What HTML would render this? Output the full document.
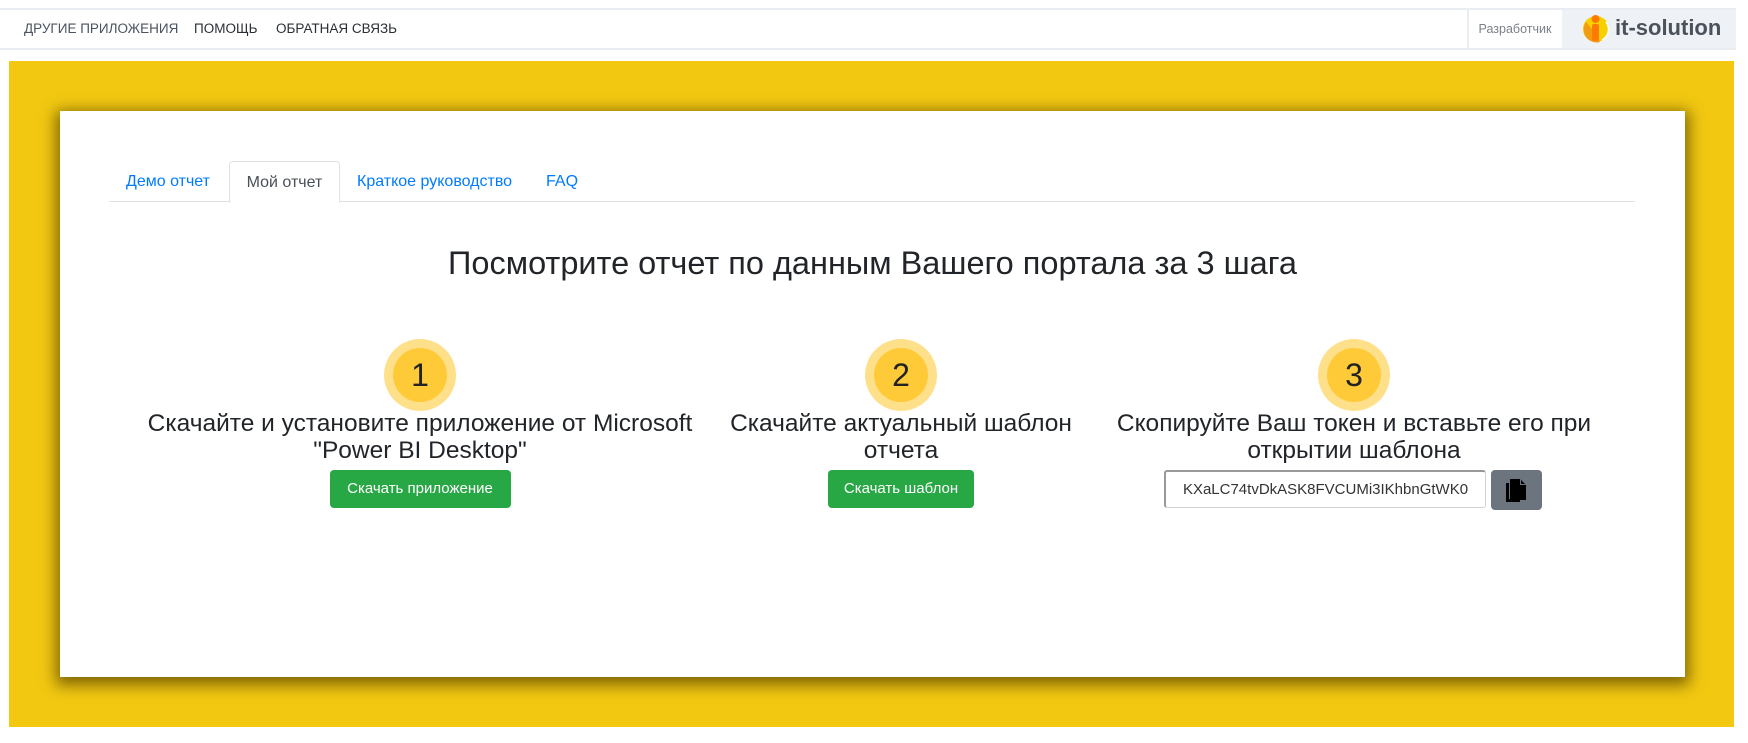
<!DOCTYPE html>
<html><head><meta charset="utf-8"><style>
*{box-sizing:border-box;margin:0;padding:0}
body{width:1748px;height:743px;background:#fff;font-family:"Liberation Sans","DejaVu Sans",sans-serif;position:relative;overflow:hidden;color:#212529}
.nav{position:absolute;left:0;top:8px;width:1736px;height:42px;border-top:2px solid #e9edf1;border-bottom:2px solid #e9edf1}
.nav a{position:absolute;top:11px;font-size:13.5px;color:#2a2f36;text-decoration:none}
.dev{position:absolute;left:1467px;top:0;width:94px;height:38px;font-size:12.5px;color:#7b8189;line-height:38px;text-align:center;border-left:2px solid #e9edf1}
.logo{position:absolute;left:1562px;top:0;width:174px;height:38px;background:#eef1f5}
.yellow{position:absolute;left:9px;top:61px;width:1725px;height:666px;background:#f2c811}
.card{position:absolute;left:60px;top:111px;width:1625px;height:566px;background:#fff;box-shadow:0 4px 14px 4px rgba(90,70,0,.75)}
.tabs{position:absolute;left:49px;top:50px;width:1526px;height:41px;border-bottom:1px solid #dee2e6}
.tab{position:absolute;top:0;height:41px;line-height:42px;font-size:16px;color:#007bff}
.tab.act{color:#495057;border:1px solid #dee2e6;border-bottom:1px solid #fff;border-radius:4px 4px 0 0;background:#fff;height:42px;top:0}
h1{position:absolute;left:0;width:1625px;top:134px;text-align:center;font-weight:normal;font-size:32.5px;color:#212529}
.col{position:absolute;top:228px;width:600px;text-align:center}
.circ{width:72px;height:72px;border-radius:50%;background:#ffe08a;margin:0 auto;position:relative}
.circ span{position:absolute;left:9px;top:9px;width:54px;height:54px;border-radius:50%;background:#ffca38;font-size:32px;line-height:54px;text-align:center;color:#222}
.txt{font-size:24.5px;line-height:27px;margin-top:-1px;color:#212529}
.btn{display:inline-block;background:#28a745;color:#fff;font-size:15px;border-radius:4px;height:38px;line-height:38px;margin-top:6px}
</style></head><body>
<div class="nav">
<a style="left:24px;color:#4a5360">ДРУГИЕ ПРИЛОЖЕНИЯ</a>
<a style="left:194px">ПОМОЩЬ</a>
<a style="left:276px">ОБРАТНАЯ СВЯЗЬ</a>
<div class="dev">Разработчик</div>
<div class="logo">
<svg width="40" height="38" viewBox="0 0 40 38" style="position:absolute;left:14px;top:0">
<circle cx="20" cy="19" r="13" fill="#f7d000"/>
<path d="M10 12 A13 13 0 0 0 24 32 L20 24 Z" fill="#f39c12"/>
<rect x="16" y="14" width="7" height="17" rx="2" fill="#ff7a00"/>
<circle cx="19.5" cy="9" r="4" fill="#ff7a00"/>
<path d="M30 12 A12 12 0 0 1 26 30" stroke="#fff" stroke-width="1.5" fill="none"/>
</svg>
<div style="position:absolute;left:53px;top:5px;font-size:22px;font-weight:bold;color:#4b525b">it-solution</div>
</div>
</div>
<div class="yellow"></div>
<div class="card">
<div class="tabs">
<div class="tab" style="left:17px">Демо отчет</div>
<div class="tab act" style="left:120px;width:111px;text-align:center">Мой отчет</div>
<div class="tab" style="left:248px">Краткое руководство</div>
<div class="tab" style="left:437px">FAQ</div>
</div>
<h1>Посмотрите отчет по данным Вашего портала за 3 шага</h1>
<div class="col" style="left:60px"><div class="circ"><span>1</span></div>
<div class="txt">Скачайте и установите приложение от Microsoft<br>"Power BI Desktop"</div>
<div class="btn" style="width:181px">Скачать приложение</div></div>
<div class="col" style="left:541px"><div class="circ"><span>2</span></div>
<div class="txt">Скачайте актуальный шаблон<br>отчета</div>
<div class="btn" style="width:146px">Скачать шаблон</div></div>
<div class="col" style="left:994px"><div class="circ"><span>3</span></div>
<div class="txt">Скопируйте Ваш токен и вставьте его при<br>открытии шаблона</div>
<div style="margin-top:6px;height:38px;position:relative">
<div style="position:absolute;left:110px;top:0;width:322px;height:38px;border:1px solid #ced4da;border-left:2px solid #999;border-top:2px solid #999;border-radius:3px;font-size:15px;line-height:35px;text-align:center;color:#333">KXaLC74tvDkASK8FVCUMi3IKhbnGtWK0</div>
<div style="position:absolute;left:437px;top:0;width:51px;height:40px;background:#6c757d;border-radius:4px">
<svg width="51" height="40" viewBox="0 0 51 40"><path d="M15 13h3v16h11v3H15z" fill="#000"/><path d="M19 9h10l6 6v15H19z" fill="#000"/><path d="M29 9v6h6z" fill="#6c757d"/><path d="M30 10v4h4z" fill="#000"/></svg>
</div></div></div>
</div>
</body></html>
